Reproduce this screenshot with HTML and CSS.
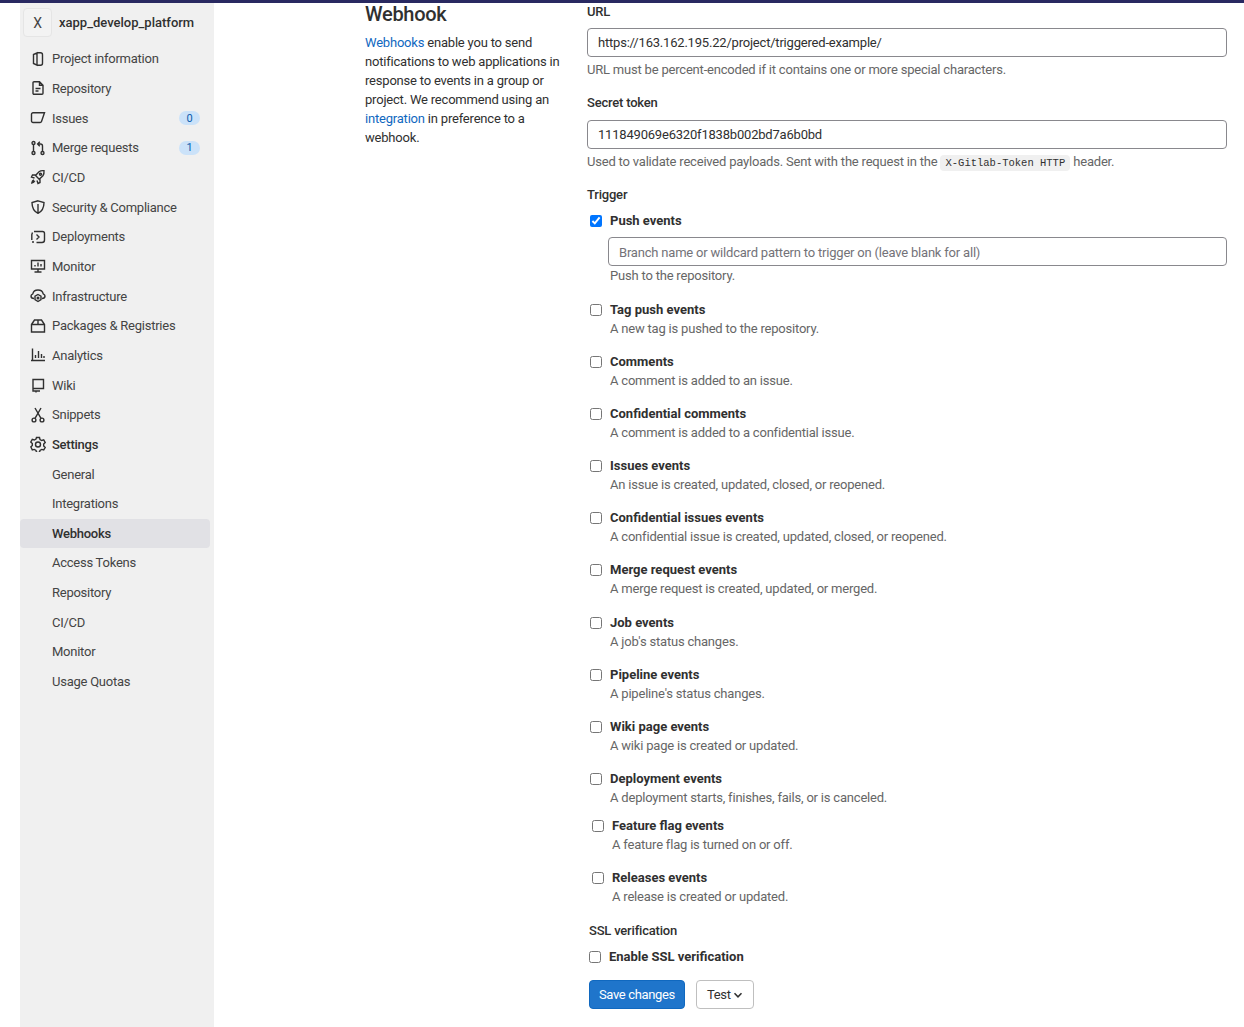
FILE: index.html
```html
<!DOCTYPE html>
<html lang="en">
<head>
<meta charset="utf-8">
<title>Webhook</title>
<link rel="stylesheet" href="styles.css">
</head>
<body>
<div class="topbar"></div>
<div class="page">
  <aside class="sidebar">
    <div class="project"><span class="avatar">X</span><span class="project-name">xapp_develop_platform</span></div>
    <nav class="nav">
      <a class="item"><svg class="ico" viewBox="0 0 16 16"><path d="M7 1.800 3.500 3.500v9L7 14.200zM7 1.800h3.500a2 2 0 0 1 2 2v8.400a2 2 0 0 1-2 2H7"/></svg>Project information</a>
      <a class="item"><svg class="ico" viewBox="0 0 16 16"><path d="M3 2.800A1 1 0 0 1 4 1.800h5.500L13 5.300v8a1 1 0 0 1-1 1H4a1 1 0 0 1-1-1zM9.500 1.800v3.500H13M5.500 8.500h5M5.500 11h3"/></svg>Repository</a>
      <a class="item"><svg class="ico" viewBox="0 0 16 16"><path d="M3 2.800h11.500l-3 8.700a1.500 1.500 0 0 1-1.400 1H3a1.500 1.500 0 0 1-1.500-1.500V4.300A1.500 1.500 0 0 1 3 2.800z"/></svg>Issues<span class="badge">0</span></a>
      <a class="item"><svg class="ico" viewBox="0 0 16 16"><circle cx="3.500" cy="3" r="1.500"/><circle cx="3.500" cy="13" r="1.500"/><circle cx="12.500" cy="13" r="1.500"/><path d="M3.500 4.500v7M12.500 11.500V6a2 2 0 0 0-2-2H8M9.800 1.800 7.600 4l2.200 2.200"/></svg>Merge requests<span class="badge">1</span></a>
      <a class="item"><svg class="ico" viewBox="0 0 16 16"><path d="M5.500 6.500 9 2.800c1.300-1 3.200-1.300 5-1.100.2 1.800-.1 3.700-1.100 5L9.200 10.200 5.800 6.800zM5.800 6H2.500L1.500 8l3 1M10 10.300v3.200l-2 1-1-3M4 11c-1.200.5-2 1.700-2.200 3 1.300-.2 2.500-1 3-2.200"/><circle cx="10.500" cy="5.300" r="1"/></svg>CI/CD</a>
      <a class="item"><svg class="ico" viewBox="0 0 16 16"><path d="M8 1.800 14 3.500c0 5-1.500 8.700-6 10.800C3.500 12.200 2 8.500 2 3.500zM8 5v9"/></svg>Security &amp; Compliance</a>
      <a class="item"><svg class="ico" viewBox="0 0 16 16"><path d="M4 2.500h8.500A2 2 0 0 1 14.500 4.500v6.500a2.500 2.500 0 0 1-2.500 2.500H6.500M2.500 3.500 1.800 5.500v5.500M2 13h2M6.500 5.500 9 8l-2.500 2.500"/></svg>Deployments</a>
      <a class="item"><svg class="ico" viewBox="0 0 16 16"><path d="M1.500 2.500h13v8.500h-13zM4.500 14h7M8 11v3M5 8.500V7M8 8.500V4.500M11 8.500V6"/></svg>Monitor</a>
      <a class="item"><svg class="ico" viewBox="0 0 16 16"><path d="M4 10.500c-2 0-3-1.200-3-2.500 0-1 .8-1.800 1.800-2.200C3.300 3.500 5.500 2 8 2s4.700 1.500 5.200 3.800c1 .4 1.800 1.200 1.800 2.200 0 1.300-1 2.500-3 2.500"/><path d="M8 6.500 11 8.200v3.500L8 13.500 5 11.700V8.200z"/><circle cx="8" cy="10" r=".8"/></svg>Infrastructure</a>
      <a class="item"><svg class="ico" viewBox="0 0 16 16"><path d="M1.500 6.500 4.500 2h7l3 4.500v7.500h-13zM1.500 6.500h13M8 2v4.500"/></svg>Packages &amp; Registries</a>
      <a class="item"><svg class="ico" viewBox="0 0 16 16"><path d="M2.500 1.500v12M1 13.500h14M5.500 11V8M8.500 11V4M11.500 11V7M14 11V9"/></svg>Analytics</a>
      <a class="item"><svg class="ico" viewBox="0 0 16 16"><path d="M3 11.500V2.500h10.500v9zM3 11.500v2.500h7M3 11.500h10.500M6 14v1.500"/></svg>Wiki</a>
      <a class="item"><svg class="ico" viewBox="0 0 16 16"><circle cx="4" cy="13" r="1.900"/><circle cx="12" cy="13" r="1.900"/><path d="M5 11.400 11 1M11 11.400 5 1"/></svg>Snippets</a>
      <a class="item settings"><svg class="ico" viewBox="0 0 16 16"><path d="M6.500 1.500h3l.5 2 1.700 1 2-.6 1.500 2.600-1.500 1.500v1.900l1.500 1.500-1.500 2.600-2-.6-1.700 1-.5 2h-3l-.5-2-1.700-1-2 .6L.8 10.900l1.500-1.500V7.500L.8 6l1.500-2.600 2 .6 1.700-1z"/><circle cx="8" cy="8.500" r="2.500"/></svg>Settings</a>
      <a class="item sub">General</a>
      <a class="item sub">Integrations</a>
      <a class="item sub active">Webhooks</a>
      <a class="item sub">Access Tokens</a>
      <a class="item sub">Repository</a>
      <a class="item sub">CI/CD</a>
      <a class="item sub">Monitor</a>
      <a class="item sub">Usage Quotas</a>
    </nav>
  </aside>
  <main class="main">
    <section class="intro">
      <h1 class="title">Webhook</h1>
      <p class="intro-text"><a class="link">Webhooks</a> enable you to send notifications to web applications in response to events in a group or project. We recommend using an <a class="link">integration</a> in preference to a webhook.</p>
    </section>
    <form class="form">
      <label class="label">URL</label>
      <input class="field" type="text" value="https://163.162.195.22/project/triggered-example/">
      <p class="help">URL must be percent-encoded if it contains one or more special characters.</p>
      <label class="label label-token">Secret token</label>
      <input class="field field-token" type="text" value="111849069e6320f1838b002bd7a6b0bd">
      <p class="help">Used to validate received payloads. Sent with the request in the <code class="code">X-Gitlab-Token HTTP</code> header.</p>
      <label class="label label-trigger">Trigger</label>
      <div class="check first"><input type="checkbox" checked><div class="check-body"><b class="name">Push events</b></div></div>
      <div class="branch"><input class="field" type="text" placeholder="Branch name or wildcard pattern to trigger on (leave blank for all)"><p class="desc">Push to the repository.</p></div>
      <div class="check"><input type="checkbox"><div class="check-body"><b class="name">Tag push events</b><p class="desc">A new tag is pushed to the repository.</p></div></div>
      <div class="check"><input type="checkbox"><div class="check-body"><b class="name">Comments</b><p class="desc">A comment is added to an issue.</p></div></div>
      <div class="check"><input type="checkbox"><div class="check-body"><b class="name">Confidential comments</b><p class="desc">A comment is added to a confidential issue.</p></div></div>
      <div class="check"><input type="checkbox"><div class="check-body"><b class="name">Issues events</b><p class="desc">An issue is created, updated, closed, or reopened.</p></div></div>
      <div class="check"><input type="checkbox"><div class="check-body"><b class="name">Confidential issues events</b><p class="desc">A confidential issue is created, updated, closed, or reopened.</p></div></div>
      <div class="check"><input type="checkbox"><div class="check-body"><b class="name">Merge request events</b><p class="desc">A merge request is created, updated, or merged.</p></div></div>
      <div class="check"><input type="checkbox"><div class="check-body"><b class="name">Job events</b><p class="desc">A job's status changes.</p></div></div>
      <div class="check"><input type="checkbox"><div class="check-body"><b class="name">Pipeline events</b><p class="desc">A pipeline's status changes.</p></div></div>
      <div class="check"><input type="checkbox"><div class="check-body"><b class="name">Wiki page events</b><p class="desc">A wiki page is created or updated.</p></div></div>
      <div class="check tight"><input type="checkbox"><div class="check-body"><b class="name">Deployment events</b><p class="desc">A deployment starts, finishes, fails, or is canceled.</p></div></div>
      <div class="check shifted"><input type="checkbox"><div class="check-body"><b class="name">Feature flag events</b><p class="desc">A feature flag is turned on or off.</p></div></div>
      <div class="check shifted"><input type="checkbox"><div class="check-body"><b class="name">Releases events</b><p class="desc">A release is created or updated.</p></div></div>
      <label class="label label-ssl">SSL verification</label>
      <div class="check ssl"><input type="checkbox"><div class="check-body"><b class="name">Enable SSL verification</b></div></div>
      <div class="actions">
        <button class="btn primary" type="button">Save changes</button>
        <button class="btn" type="button">Test<svg class="chev" viewBox="0 0 10 10"><path d="M1.500 3.200 5 6.800l3.500-3.600"/></svg></button>
      </div>
    </form>
  </main>
</div>
</body>
</html>
```
FILE: styles.css
```css
* { box-sizing: border-box; }
html, body { margin: 0; height: 1027px; overflow: hidden; background: #fff; }
body { font-family: Roboto, "Noto Sans", sans-serif; font-size: 13px; color: #303030; letter-spacing: -.2px; }
.topbar { height: 3px; background: #292961; }
.page { display: flex; height: 1024px; }
.sidebar { width: 194px; margin-left: 20px; background: #f0f0f0; flex: none; }
.project { display: flex; align-items: center; height: 29px; margin: 5px 0 0 3px; }
.avatar { width: 29px; height: 29px; display: flex; align-items: center; justify-content: center; background: #f3f3f3; border: 1px solid #e5e5e5; border-radius: 4px; color: #444; font-size: 14px; }
.project-name { margin-left: 7px; color: #303030; font-weight: 500; letter-spacing: 0; }
.nav { margin-top: 7px; }
.item { position: relative; display: flex; align-items: center; height: 29.66px; width: 190px; padding-left: 10px; color: #444; letter-spacing: -.25px; }
.ico { width: 16px; height: 16px; margin-right: 6px; fill: none; stroke: #303030; stroke-width: 1.4; flex: none; }
.settings { color: #303030; font-weight: 500; }
.sub { padding-left: 32px; }
.active { background: #e1e1e5; border-radius: 4px; font-weight: 500; color: #303030; }
.badge { position: absolute; right: 10px; top: 8px; width: 21px; height: 14px; border-radius: 7px; background: #cbe2f9; color: #0b5cad; font-size: 11px; display: flex; align-items: center; justify-content: center; letter-spacing: 0; }
.main { display: flex; flex: 1; padding-left: 151px; }
.intro { width: 222px; flex: none; }
.title { margin: 0; font-size: 20px; line-height: 22px; font-weight: 500; letter-spacing: -.3px; color: #303030; }
.intro-text { margin: 8px 0 0; line-height: 19px; width: 200px; }
.link { color: #1068bf; }
.form { width: 640px; flex: none; }
.label { display: block; line-height: 18px; font-weight: 500; color: #303030; }
.label-token { margin-top: 15px; }
.label-trigger { margin-top: 13px; }
.label-ssl { margin: 2px 0 0 2px; }
.field { display: block; width: 100%; height: 29px; margin-top: 7px; padding: 0 10px; border: 1px solid #89888d; border-radius: 4px; background: #fff; font: inherit; letter-spacing: inherit; color: #303030; outline: 0; }
.field-token { margin-top: 8px; }
.field::placeholder { color: #737278; opacity: 1; }
.help { margin: 3px 0 0; line-height: 19px; color: #666; }
.code { font-family: "Liberation Mono", monospace; font-size: 10.5px; letter-spacing: 0; padding: 2px 5px; background: #f0f0f0; border-radius: 4px; color: #303030; }
.check { display: flex; height: 52.1px; padding-left: 3px; }
.check input { width: 12px; height: 12px; margin: 4px 8px 0 0; flex: none; }
.check-body { line-height: 19px; }
.name { font-weight: 700; color: #303030; letter-spacing: 0; display: block; }
.desc { margin: 0; color: #666; }
.first { height: 19px; margin-top: 7px; }
.branch { margin-left: 21px; height: 63px; }
.branch .field { padding-top: 1px; }
.branch .desc { line-height: 19px; padding-left: 2px; }
.tight { height: 47px; }
.shifted { padding-left: 5px; }
.ssl { height: 19px; margin-top: 7px; padding-left: 2px; }
.actions { display: flex; gap: 11px; margin: 14px 0 0 2px; }
.btn { height: 29px; padding: 0 10px; border: 1px solid #bfbfbf; border-radius: 4px; background: #fff; font: inherit; letter-spacing: -.35px; color: #303030; display: flex; align-items: center; }
.primary { padding: 0 9px; background: #1f75cb; border-color: #1068bf; color: #fff; }
.chev { width: 10px; height: 10px; margin-left: 2px; fill: none; stroke: #303030; stroke-width: 1.5; }
```
